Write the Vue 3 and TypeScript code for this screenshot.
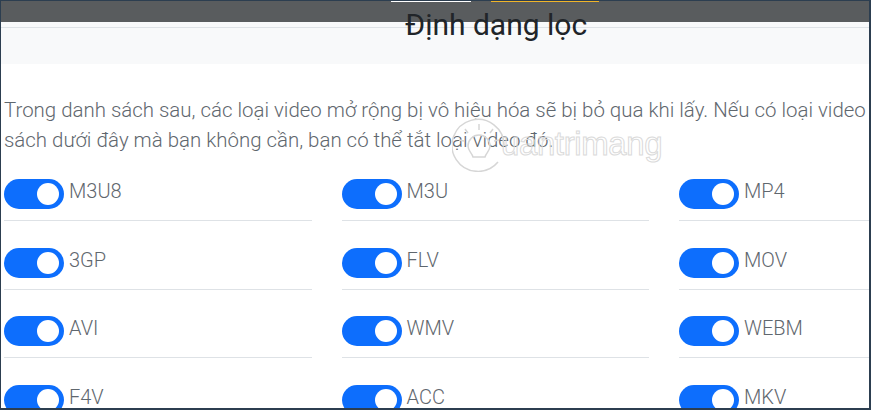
<script setup lang="ts">
const formats: string[] = ['M3U8', 'M3U', 'MP4', '3GP', 'FLV', 'MOV', 'AVI', 'WMV', 'WEBM', 'F4V', 'ACC', 'MKV']
</script>

<template>
  <div class="frame">
    <div class="topbar">
      <span class="tab tab-white"></span>
      <span class="tab tab-yellow"></span>
    </div>
    <header class="head">
      <h1 class="title">Định dạng lọc</h1>
    </header>
    <main class="body">
      <p class="intro">Trong danh sách sau, các loại video mở rộng bị vô hiệu hóa sẽ bị bỏ qua khi lấy. Nếu có loại video<br>sách dưới đây mà bạn không cần, bạn có thể tắt loại video đó.</p>
      <div class="grid">
        <div v-for="f in formats" :key="f" class="item">
          <span class="switch"><span class="knob"></span></span>
          <span class="label">{{ f }}</span>
        </div>
      </div>
      <div class="mark">
        <svg class="sun" width="60" height="56" viewBox="0 0 60 56" fill="none" stroke="#d6d6d6" stroke-width="1.5">
          <path d="M46 46A26 26 0 1 1 52 30" />
          <path d="M16 30a11 11 0 0 1 22 0c0 5-4 7-5 11h-12c-1-4-5-6-5-11z" />
          <path d="M27 8v6M13 13l3 4M41 13l-3 4M7 24l5 1M47 24l-5 1" />
        </svg>
        <span class="mark-text">uantrimang</span>
      </div>
    </main>
  </div>
</template>

<style>
html, body { margin: 0; background: #fff; }
</style>

<style scoped>
.frame {
  position: relative;
  width: 871px;
  height: 410px;
  box-sizing: border-box;
  border: 1px solid #2c3e50;
  border-right-width: 2px;
  border-bottom-width: 2px;
  overflow: hidden;
  font-family: Roboto, "Open Sans", sans-serif;
  background: #fff;
}
.topbar {
  position: relative;
  height: 21px;
  background: #595c5e;
}
.tab { position: absolute; top: 0; height: 1px; }
.tab-white { left: 390px; width: 80px; background: #fff; }
.tab-yellow { left: 490px; width: 108px; background: #f0b429; }
.head {
  height: 42px;
  box-sizing: border-box;
  padding-top: 5px;
  background: #f8f9fa;
}
.head::before {
  content: "";
  display: block;
  height: 1px;
  background: #dee2e6;
}
.title {
  position: absolute;
  top: 6px;
  left: 404px;
  margin: 0;
  font-size: 30px;
  line-height: 36px;
  font-weight: 400;
  color: #212529;
  white-space: nowrap;
}
.body {
  position: relative;
  padding: 31px 0 0 3px;
}
.intro {
  margin: 0;
  width: 900px;
  font-size: 20.45px;
  font-weight: 300;
  line-height: 30px;
  color: #5f676e;
  white-space: nowrap;
}
.grid {
  display: grid;
  grid-template-columns: repeat(3, 307.5px);
  column-gap: 30px;
  margin-top: 24px;
  width: 940px;
}
.item {
  display: flex;
  align-items: flex-start;
  gap: 5px;
  height: 41px;
  padding-bottom: 27.5px;
  position: relative;
}
.item::after {
  content: "";
  position: absolute;
  left: 0;
  right: 0;
  top: 41px;
  height: 1px;
  background: #dee2e6;
}
.switch {
  display: block;
  position: relative;
  width: 60px;
  height: 30px;
  border-radius: 15px;
  background: #0d6efd;
  flex: none;
}
.knob {
  position: absolute;
  top: 4px;
  right: 5px;
  width: 22px;
  height: 22px;
  border-radius: 50%;
  background: #fff;
}
.label {
  font-size: 20px;
  font-weight: 300;
  line-height: 24px;
  color: #5f676e;
}
.mark {
  position: absolute;
  left: 451px;
  top: 52px;
  display: flex;
  align-items: flex-end;
  pointer-events: none;
}
.mark-text {
  font-family: "Liberation Sans", sans-serif;
  font-size: 33px;
  line-height: 40px;
  letter-spacing: -0.4px;
  color: transparent;
  -webkit-text-stroke: 1px #dadada;
  margin-left: -11px;
  margin-bottom: 8px;
}
</style>
